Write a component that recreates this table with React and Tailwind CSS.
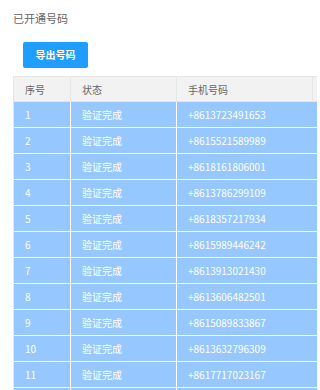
const rows = [
  '+8613723491653',
  '+8615521589989',
  '+8618161806001',
  '+8613786299109',
  '+8618357217934',
  '+8615989446242',
  '+8613913021430',
  '+8613606482501',
  '+8615089833867',
  '+8613632796309',
  '+8617717023167',
]

export default function App() {
  return (
    <div className="w-[320px] h-[390px] overflow-hidden bg-white pt-[9px] pl-[13px] font-['Noto_Sans_CJK_SC',sans-serif]">
      <div className="text-[11px] leading-[18px] text-[#666]">已开通号码</div>

      <button className="mt-[15px] ml-[10px] w-[65px] h-[26px] rounded-[2px] bg-[#1e9fff] text-white text-[10px] font-bold leading-none">
        导出号码
      </button>

      <div className="mt-[8px] w-[304px] border-l border-[#e6e6e6]">
        <div className="grid grid-cols-[57px_106px_136px_5px] h-[26px] bg-[#f2f2f2] border-t border-b border-[#e6e6e6] text-[10px] text-[#666]">
          <div className="flex items-center pl-[11px] border-r border-[#e6e6e6]">序号</div>
          <div className="flex items-center pl-[11px] border-r border-[#e6e6e6]">状态</div>
          <div className="flex items-center pl-[11px] border-r border-[#e6e6e6]">手机号码</div>
          <div />
        </div>

        {rows.map((phone, i) => (
          <div
            key={i}
            className="grid grid-cols-[57px_106px_141px] h-[26px] bg-[#96c8ff] border-b border-white text-[10px] text-white"
          >
            <div className="flex items-center pl-[11px] border-r border-white">{i + 1}</div>
            <div className="flex items-center pl-[11px] border-r border-white">验证完成</div>
            <div className="flex items-center pl-[11px]">{phone}</div>
          </div>
        ))}

        {/* next row just peeks in at the bottom edge */}
        <div className="grid grid-cols-[57px_106px_141px] h-[26px] bg-[#96c8ff]">
          <div className="border-r border-white" />
          <div className="border-r border-white" />
          <div />
        </div>
      </div>
    </div>
  )
}
